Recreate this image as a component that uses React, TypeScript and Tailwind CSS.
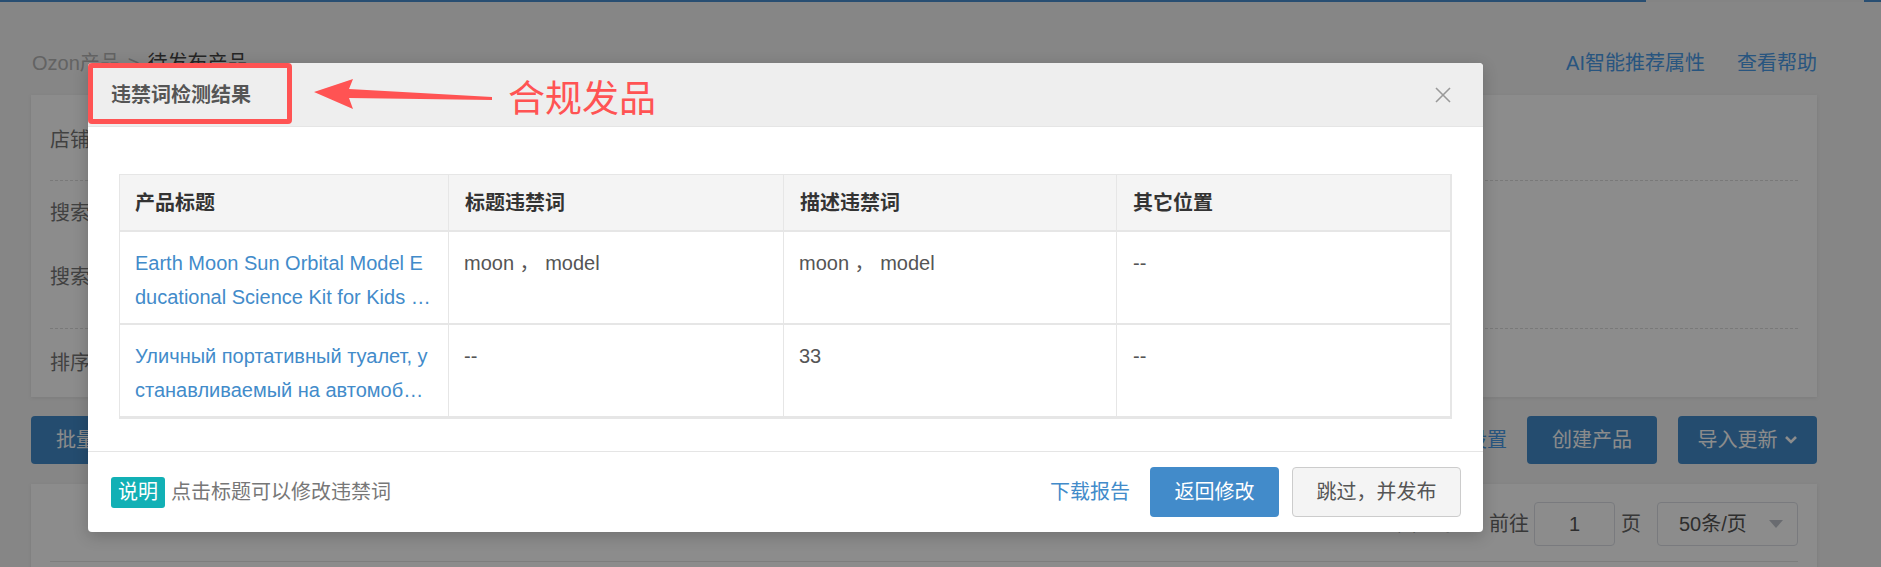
import React from "react";

const FONT = "font-['Liberation_Sans','Noto_Sans_CJK_SC',sans-serif]";

function Cell({ children, last }: { children: React.ReactNode; last?: boolean }) {
  return (
    <div className={`px-[15px] pt-[14px] leading-[34px] text-[20px] text-[#555] ${last ? "" : "border-r border-[#e6e6e6]"}`}>
      {children}
    </div>
  );
}

function TitleCell({ l1, l2 }: { l1: string; l2: string }) {
  return (
    <div className="px-[15px] pt-[14px] leading-[34px] text-[20px] text-[#428bca] border-r border-[#e6e6e6] min-w-0">
      <div className="whitespace-nowrap overflow-hidden">{l1}</div>
      <div className="truncate">{l2}</div>
    </div>
  );
}

export default function App() {
  return (
    <div className={`relative w-[1881px] h-[567px] overflow-hidden bg-[#f4f4f4] ${FONT}`}>
      {/* top stripe */}
      <div className="flex h-[2px]">
        <div className="w-[1646px] bg-[#4a8fd0]" />
        <div className="w-[218px] bg-[#f0f0f0]" />
        <div className="flex-1 bg-[#4a8fd0]" />
      </div>

      {/* page content */}
      <div className="pl-[31px] pr-[64px]">
        <div className="mt-[43px] h-[36px] flex items-center justify-between text-[20px]">
          <div className="pl-[1px] flex items-center gap-[8px]">
            <span className="text-[#b5b5b5]">Ozon产品</span>
            <span className="text-[#b5b5b5]">&gt;</span>
            <span className="text-[#444]">待发布产品</span>
          </div>
          <div className="flex items-center gap-[32px] text-[#4a9be8]">
            <span>AI智能推荐属性</span>
            <span>查看帮助</span>
          </div>
        </div>

        <div className="mt-[14px] bg-white shadow-[0_1px_4px_rgba(0,0,0,0.08)] px-[19px] text-[20px] text-[#777]">
          <div className="h-[86px] pt-[4px] flex items-center border-b border-dashed border-[#dddddd]">店铺：</div>
          <div className="pb-[19px] border-b border-dashed border-[#dddddd]">
            <div className="h-[64px] flex items-center">搜索类型：</div>
            <div className="h-[64px] flex items-center">搜索内容：</div>
          </div>
          <div className="h-[68px] flex items-center">排序方式：</div>
        </div>

        <div className="mt-[19px] h-[48px] flex items-stretch justify-between text-[20px]">
          <div className="bg-[#428bca] text-white rounded-[4px] px-[25px] flex items-center">批量操作</div>
          <div className="flex items-center">
            <span className="text-[#4a9be8] mr-[20px]">批量设置</span>
            <div className="w-[130px] h-full bg-[#428bca] text-white rounded-[4px] flex items-center justify-center">创建产品</div>
            <div className="ml-[21px] w-[139px] h-full bg-[#428bca] text-white rounded-[4px] flex items-center justify-center gap-[6px]">
              导入更新
              <svg width="14" height="10" viewBox="0 0 14 10">
                <polyline points="2,2 7,7 12,2" fill="none" stroke="white" strokeWidth="2.6" />
              </svg>
            </div>
          </div>
        </div>

        <div className="mt-[20px] bg-white shadow-[0_1px_4px_rgba(0,0,0,0.08)] px-[19px] pt-[18px] h-[200px]">
          <div className="border-b border-[#e5e5e5] pb-[15px]">
            <div className="h-[44px] flex items-center justify-end text-[20px] text-[#666]">
              <span className="mr-[30px]">共 2 条</span>
              <span>前往</span>
              <div className="ml-[5px] w-[81px] h-[44px] border border-[#dcdfe6] rounded-[4px] flex items-center justify-center text-[#555]">1</div>
              <span className="ml-[6px]">页</span>
              <div className="ml-[16px] w-[141px] h-[44px] border border-[#dcdfe6] rounded-[4px] flex items-center justify-between pl-[21px] pr-[14px] text-[#555]">
                50条/页
                <svg width="14" height="9" viewBox="0 0 14 9">
                  <polygon points="0,0 14,0 7,8" fill="#c0c4cc" />
                </svg>
              </div>
            </div>
          </div>
        </div>
      </div>

      {/* overlay */}
      <div className="absolute inset-0 bg-black/45" />

      {/* modal */}
      <div className="absolute left-[88px] top-[63px] w-[1395px] h-[469px] bg-white rounded-[4px] shadow-[0_4px_16px_rgba(0,0,0,0.2)] flex flex-col">
        <div className="h-[64px] shrink-0 bg-[#eeeeee] border-b border-[#e5e5e5] rounded-t-[4px] flex items-center justify-between pl-[23px] pr-[32px]">
          <span className="text-[20px] font-bold text-[#555]">违禁词检测结果</span>
          <svg width="16" height="16" viewBox="0 0 16 16">
            <line x1="1" y1="1" x2="15" y2="15" stroke="#999" strokeWidth="1.6" />
            <line x1="15" y1="1" x2="1" y2="15" stroke="#999" strokeWidth="1.6" />
          </svg>
        </div>

        <div className="pt-[47px] px-[31px] pb-[32px]">
          <div className="border border-[#e6e6e6]">
            <div className="grid grid-cols-[329px_335px_333px_1fr] h-[57px] bg-[#f4f4f4] border-b-2 border-[#e6e6e6] text-[20px] font-bold text-[#333]">
              <div className="px-[15px] flex items-center border-r border-[#e6e6e6]">产品标题</div>
              <div className="px-[16px] flex items-center border-r border-[#e6e6e6]">标题违禁词</div>
              <div className="px-[16px] flex items-center border-r border-[#e6e6e6]">描述违禁词</div>
              <div className="px-[16px] flex items-center border-r border-[#e6e6e6]">其它位置</div>
            </div>
            <div className="grid grid-cols-[329px_335px_333px_1fr] h-[93px] border-b-2 border-[#e6e6e6]">
              <TitleCell l1="Earth Moon Sun Orbital Model E" l2="ducational Science Kit for Kids Children Astronomy Toy" />
              <Cell>moon ，&nbsp;model</Cell>
              <Cell>moon ，&nbsp;model</Cell>
              <div className="px-[16px] pt-[14px] leading-[34px] text-[20px] text-[#555] border-r border-[#e6e6e6]">--</div>
            </div>
            <div className="grid grid-cols-[329px_335px_333px_1fr] h-[93px] border-b-2 border-[#e6e6e6]">
              <TitleCell l1="Уличный портативный туалет, у" l2="станавливаемый на автомобиль для кемпинга" />
              <Cell>--</Cell>
              <Cell>33</Cell>
              <div className="px-[16px] pt-[14px] leading-[34px] text-[20px] text-[#555] border-r border-[#e6e6e6]">--</div>
            </div>
          </div>
        </div>

        <div className="flex-1 border-t border-[#e5e5e5] flex items-center justify-between pl-[23px] pr-[22px] text-[20px]">
          <div className="flex items-center">
            <span className="h-[31px] px-[7px] rounded-[3px] bg-[#12b0b5] text-white leading-[31px]">说明</span>
            <span className="ml-[6px] text-[#777]">点击标题可以修改违禁词</span>
          </div>
          <div className="flex items-center">
            <span className="text-[#428bca] mr-[20px]">下载报告</span>
            <div className="w-[129px] h-[50px] rounded-[4px] bg-[#428bca] text-white flex items-center justify-center">返回修改</div>
            <div className="ml-[13px] w-[169px] h-[50px] rounded-[4px] bg-[#f4f4f4] border border-[#cccccc] text-[#555] flex items-center justify-center">跳过，并发布</div>
          </div>
        </div>
      </div>

      {/* annotation */}
      <div className="absolute left-[88px] top-[63px] w-[204px] h-[61px] border-[5px] border-[#ff5353] rounded-[4px]" />
      <svg className="absolute left-0 top-0 pointer-events-none" width="1881" height="567" viewBox="0 0 1881 567">
        <polygon points="314,92 353,79 349,89 492,97 492,100 349,98 353,109" fill="#ff5353" />
      </svg>
      <div className="absolute left-[508px] top-[80px] text-[37px] leading-[40px] text-[#ff5353]">合规发品</div>
    </div>
  );
}
